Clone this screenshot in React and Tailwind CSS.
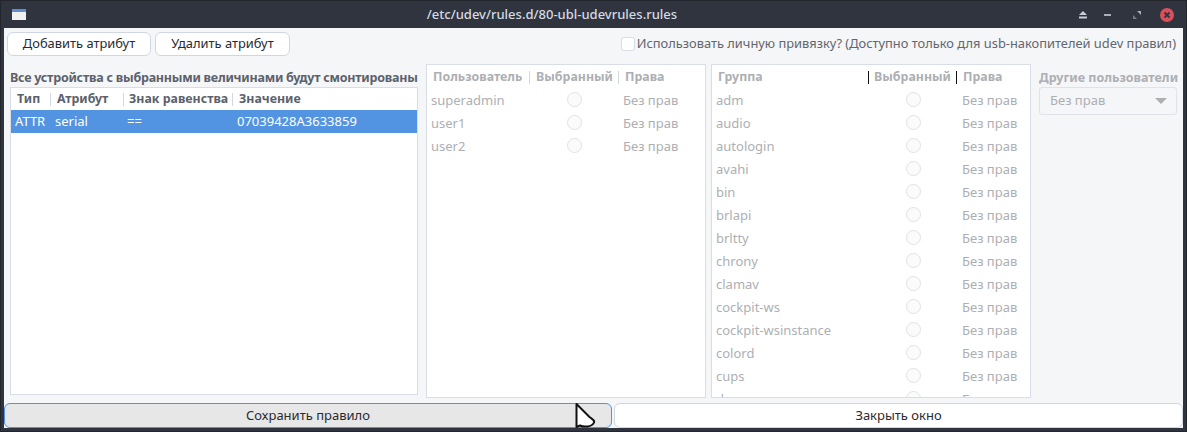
import React from 'react';

const users = ['superadmin', 'user1', 'user2'];
const groups = [
  'adm', 'audio', 'autologin', 'avahi', 'bin', 'brlapi', 'brltty', 'chrony',
  'clamav', 'cockpit-ws', 'cockpit-wsinstance', 'colord', 'cups', 'daemon',
];

const Sep = ({ dark }) => (
  <span className={`h-[13px] w-px ${dark ? 'bg-[#111]' : 'bg-[#d3d7e0]'}`} />
);

const PermRow = ({ name, nameW }) => (
  <div className="flex h-[23px] shrink-0 items-center pl-[4px] text-[13px] text-[#adafb3]">
    <span className={nameW}>{name}</span>
    <span className="mb-[2px] h-[15px] w-[15px] shrink-0 rounded-full border border-[#dfe2e9] bg-[#fbfbfc]" />
    <span className="ml-[41px]">Без прав</span>
  </div>
);

const App = () => {
  return (
    <div className="flex h-[432px] w-[1187px] flex-col overflow-hidden border border-[#22252c] bg-[#2f343f] px-[3px] pb-[3px] font-['Noto_Sans',sans-serif]">
      <div className="flex h-[27px] shrink-0 items-center text-[#d3dae3]">
        <div className="ml-[8px] h-[11px] w-[14px] border-t-[3px] border-[#5b8fd0] bg-[#f0f0f0]" />
        <div className="ml-[1px] flex-1 text-center text-[13px] font-medium">/etc/udev/rules.d/80-ubl-udevrules.rules</div>
        <div className="flex items-center">
          <svg width="12" height="10" viewBox="0 0 12 10" className="mr-[15px]">
            <path d="M6 1 L10 5 H2 Z M2 6.5 H10 V8.5 H2 Z" fill="#c8cdd6" />
          </svg>
          <span className="mr-[22px] h-[2px] w-[7px] bg-[#a9aeb8]" />
          <svg width="8" height="8" viewBox="0 0 8 8" className="mr-[19px]">
            <path d="M4 0 H8 V4 Z" fill="#a9aeb8" />
            <path d="M0 4 L4 8 H0 Z" fill="#787d87" />
          </svg>
          <span className="mr-[9px] flex h-[14px] w-[14px] items-center justify-center rounded-full bg-[#d9505a]">
            <svg width="8" height="8" viewBox="0 0 8 8">
              <path d="M1.5 1.5 L6.5 6.5 M6.5 1.5 L1.5 6.5" stroke="#2f343f" strokeWidth="1.8" />
            </svg>
          </span>
        </div>
      </div>

      <div className="relative flex min-h-0 flex-1 flex-col bg-[#f5f6f7]">
        <div className="mt-[4px] flex h-[23px] shrink-0 items-center pl-[3px]">
          <button className="h-[24px] w-[144px] rounded-[6px] border border-[#cfd6e6] bg-white text-[12.9px] text-[#2a2b2f]">Добавить атрибут</button>
          <button className="ml-[4px] h-[24px] w-[135px] rounded-[6px] border border-[#cfd6e6] bg-white text-[12.9px] text-[#2a2b2f]">Удалить атрибут</button>
          <div className="ml-auto mr-[7px] flex items-center text-[12.87px] text-[#62666e]">
            <span className="mr-[2px] h-[14px] w-[14px] rounded-[3px] border border-[#d8dce6] bg-white" />
            Использовать личную привязку? (Доступно только для usb-накопителей udev правил)
          </div>
        </div>

        <div className="flex min-h-0 flex-1 items-start pl-[6px] pt-[9px]">
          <div className="flex w-[408px] shrink-0 flex-col">
            <div className="mt-[4px] h-[19px] text-[12.5px] leading-[19px] font-bold tracking-[-0.24px] whitespace-nowrap text-[#5c616c]">Все устройства с выбранными величинами будут смонтированы</div>
            <div className="h-[308px] border border-[#d9dde6] bg-white">
              <div className="flex h-[22px] items-center text-[12.4px] font-bold text-[#5c616c]">
                <span className="w-[39px] pl-[6px]">Тип</span>
                <Sep />
                <span className="w-[72px] pl-[6px]">Атрибут</span>
                <Sep />
                <span className="w-[108px] pl-[5px] whitespace-nowrap">Знак равенства</span>
                <Sep />
                <span className="pl-[6px]">Значение</span>
              </div>
              <div className="flex h-[23px] items-center bg-[#5294e2] text-[13px] text-white">
                <span className="w-[41px] pl-[4px]">ATTR</span>
                <span className="w-[72px] pl-[3px]">serial</span>
                <span className="w-[113px] pl-[3px]">==</span>
                <span>07039428A3633859</span>
              </div>
            </div>
          </div>

          <div className="ml-[8px] h-[334px] w-[280px] shrink-0 border border-[#d9dde6] bg-white">
            <div className="flex h-[24px] items-center text-[12.4px] font-bold text-[#adafb3]">
              <span className="w-[102px] pl-[6px]">Пользователь</span>
              <Sep />
              <span className="w-[88px] pl-[6px]">Выбранный</span>
              <Sep />
              <span className="pl-[6px]">Права</span>
            </div>
            {users.map((u) => (
              <PermRow key={u} name={u} nameW="w-[136px]" />
            ))}
          </div>

          <div className="ml-[5px] flex h-[334px] w-[320px] shrink-0 flex-col overflow-hidden border border-[#d9dde6] bg-white">
            <div className="flex h-[24px] shrink-0 items-center text-[12.4px] font-bold text-[#adafb3]">
              <span className="w-[156px] pl-[6px]">Группа</span>
              <Sep dark />
              <span className="w-[87px] pl-[5px]">Выбранный</span>
              <Sep dark />
              <span className="pl-[6px]">Права</span>
            </div>
            {groups.map((g) => (
              <PermRow key={g} name={g} nameW="w-[190px]" />
            ))}
          </div>

          <div className="ml-[8px] flex w-[138px] shrink-0 flex-col">
            <div className="mt-[4px] h-[19px] text-[12.5px] leading-[19px] font-bold whitespace-nowrap text-[#adafb3]">Другие пользователи</div>
            <div className="flex h-[28px] items-center justify-between rounded-[3px] border border-[#dfe2e9] bg-[#f5f6f7] pl-[10px] pr-[9px] text-[13px] text-[#adafb3]">
              Без прав
              <svg width="12" height="6" viewBox="0 0 12 6"><path d="M0 0 H12 L6 6 Z" fill="#adafb3" /></svg>
            </div>
          </div>
        </div>

        <div className="mt-[4px] flex h-[25px] shrink-0 gap-[2px]">
          <button className="h-full w-[608px] rounded-[6px] border border-[#5294e2] bg-[#e7e7e8] text-[13px] text-[#2a2b2f]">Сохранить правило</button>
          <button className="h-full flex-1 rounded-[6px] border border-[#cfd6e6] bg-white text-[13px] text-[#2a2b2f]">Закрыть окно</button>
        </div>

        <svg width="24" height="26" viewBox="0 0 24 26" className="absolute bottom-[-1px] left-[570px]">
          <path d="M2.5 1 V24 L6 22.5 C9 24 18 24.5 20 19.5 C21 17 18 16 15.5 14 Z" fill="#fff" stroke="#111" strokeWidth="2" strokeLinejoin="round" />
        </svg>
      </div>
    </div>
  );
};

export default App;
